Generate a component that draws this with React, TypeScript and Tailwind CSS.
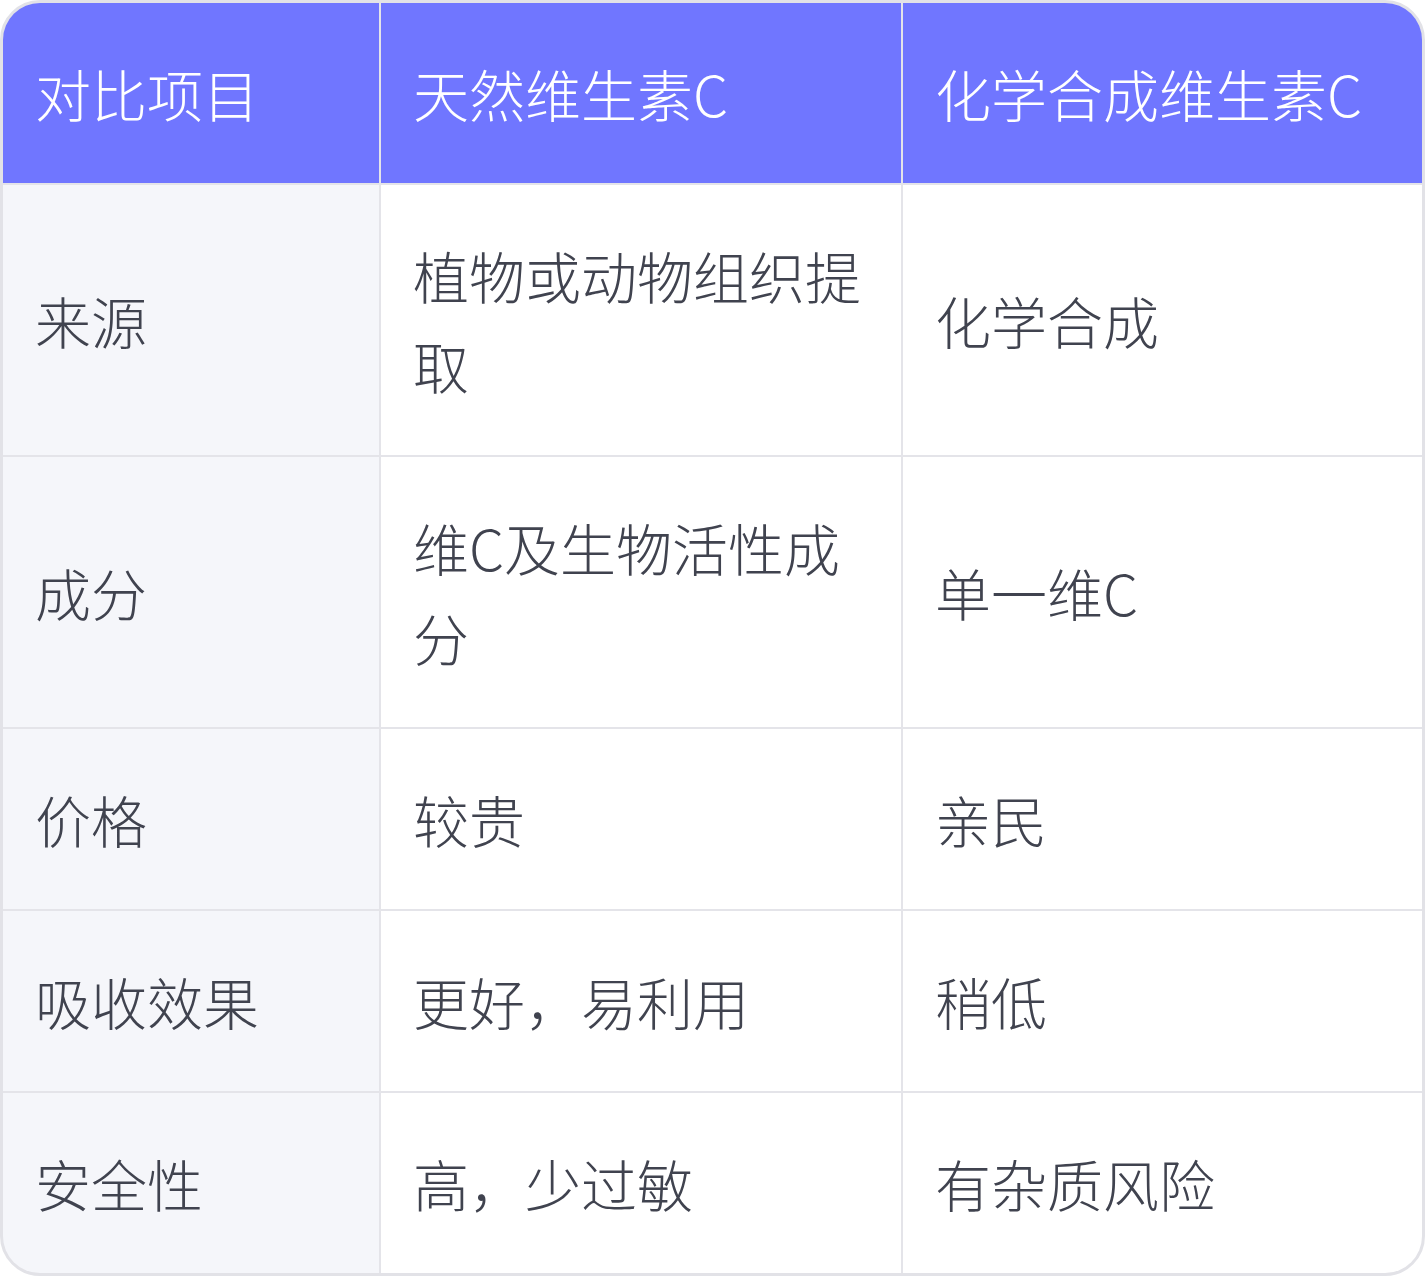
import React from "react";

const rows: [string, string, string][] = [
  ["来源", "植物或动物组织提取", "化学合成"],
  ["成分", "维C及生物活性成分", "单一维C"],
  ["价格", "较贵", "亲民"],
  ["吸收效果", "更好，易利用", "稍低"],
  ["安全性", "高，少过敏", "有杂质风险"],
];

const font = { fontFamily: '"Noto Sans CJK SC", "Noto Sans", sans-serif' };

export default function App() {
  return (
    <div className="w-[1425px] h-[1276px] bg-white" style={font}>
      <div className="w-[1425px] h-[1276px] rounded-[40px] border-[3px] border-[#e2e2e7] overflow-hidden bg-[#e4e4e9] grid grid-cols-[376px_520px_1fr] grid-rows-[180px_270px_270px_180px_180px_180px] gap-[2px] text-[56px] leading-[1.6] font-light">
        {["对比项目", "天然维生素C", "化学合成维生素C"].map((h) => (
          <div key={h} className="bg-[#7076ff] text-white pl-[32px] pr-[34px] flex items-center">
            {h}
          </div>
        ))}
        {rows.map((r) => (
          <React.Fragment key={r[0]}>
            <div className="bg-[#f5f6fa] text-[#40434f] pl-[32px] pr-[34px] flex items-center">{r[0]}</div>
            <div className="bg-white text-[#40434f] pl-[32px] pr-[34px] flex items-center">{r[1]}</div>
            <div className="bg-white text-[#40434f] pl-[32px] pr-[34px] flex items-center">{r[2]}</div>
          </React.Fragment>
        ))}
      </div>
    </div>
  );
}
